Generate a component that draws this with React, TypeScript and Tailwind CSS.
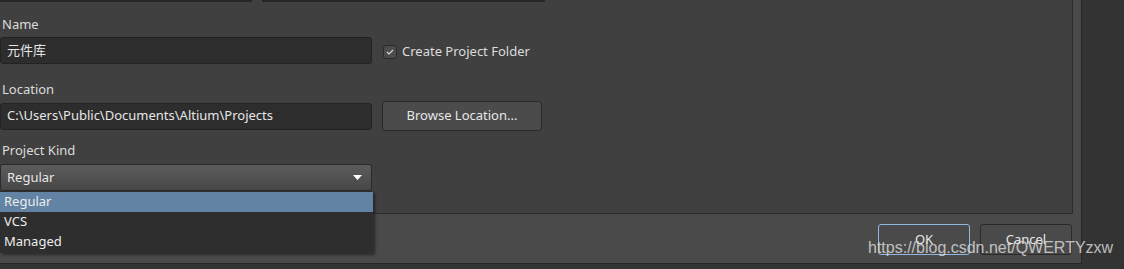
const font = "font-['Noto_Sans','Noto_Sans_CJK_SC',sans-serif]";

const Label = ({ children }: { children: React.ReactNode }) => (
  <div className="text-[13px] leading-[18px] text-[#dcdcdc]">{children}</div>
);

const TextField = ({ value }: { value: string }) => (
  <div className="w-[372px] h-[27px] flex items-center px-[6px] bg-[#2d2d2d] border border-[#232323] rounded-[3px] text-[13px] text-[#e6e6e6]">
    {value}
  </div>
);

const DialogButton = ({
  label,
  focused = false,
}: {
  label: string;
  focused?: boolean;
}) => (
  <button
    className={
      focused
        ? "w-[92px] h-[31px] rounded-[3px] border border-[#8fb8e2] bg-[#4a4a4a] text-[13px] text-[#e6e6e6]"
        : "w-[92px] h-[31px] rounded-[3px] border border-[#2a2a2a] bg-[#4a4a4a] text-[13px] text-[#e6e6e6]"
    }
  >
    {label}
  </button>
);

export default function App() {
  return (
    <div className={`relative w-[1124px] h-[269px] overflow-hidden bg-[#333333] ${font}`}>
      <div className="w-[1082px] h-[264px] flex flex-col bg-[#4a4a4a] border-r border-b border-[#262626]">
        {/* form panel */}
        <div className="w-[1073px] h-[214px] shrink-0 flex flex-col bg-[#404040] border-r border-b border-[#2b2b2b]">
          <div className="flex h-[2px] gap-[10px]">
            <div className="w-[252px] bg-[#262626]" />
            <div className="w-[283px] bg-[#262626]" />
          </div>

          <div className="pl-[2px] mt-[13px]">
            <Label>Name</Label>
          </div>
          <div className="flex items-center mt-[4px]">
            <TextField value="元件库" />
            <label className="flex items-center ml-[11px] mt-[3px] gap-[5px] text-[13px] text-[#dcdcdc]">
              <span className="w-[14px] h-[14px] flex items-center justify-center rounded-[3px] bg-[#4c4c4c] border border-[#2a2a2a]">
                <svg width="8" height="6" viewBox="0 0 8 6" fill="none">
                  <path d="M1 3l2 2 4-4" stroke="#d8d8d8" strokeWidth="1.1" />
                </svg>
              </span>
              Create Project Folder
            </label>
          </div>

          <div className="pl-[2px] mt-[16px]">
            <Label>Location</Label>
          </div>
          <div className="flex items-center mt-[3px]">
            <TextField value="C:\Users\Public\Documents\Altium\Projects" />
            <button className="ml-[10px] w-[160px] h-[30px] rounded-[3px] border border-[#2a2a2a] bg-[#4b4b4b] text-[13px] text-[#e6e6e6]">
              Browse Location...
            </button>
          </div>

          <div className="pl-[2px] mt-[10px]">
            <Label>Project Kind</Label>
          </div>
          <div className="mt-[5px] w-[372px] h-[27px] flex items-center justify-between px-[6px] rounded-[3px] border border-[#2a2a2a] bg-gradient-to-b from-[#5c5c5c] to-[#474747] text-[13px] text-[#e6e6e6]">
            <span>Regular</span>
            <svg width="9" height="5" viewBox="0 0 9 5" className="mr-[3px]">
              <path d="M0 0h9L4.5 5z" fill="#ffffff" />
            </svg>
          </div>
        </div>

        {/* footer */}
        <div className="flex justify-end gap-[10px] pt-[10px] pr-[9px]">
          <DialogButton label="OK" focused />
          <DialogButton label="Cancel" />
        </div>
      </div>

      {/* open dropdown list */}
      <div className="absolute left-0 top-[191px] w-[373px] flex flex-col py-[1px] bg-[#2e2e2e] shadow-[2px_2px_3px_rgba(0,0,0,0.45)] text-[13px] text-[#ececec]">
        <div className="h-[20px] flex items-center pl-[4px] bg-[#6283a3]">Regular</div>
        <div className="h-[20px] flex items-center pl-[4px]">VCS</div>
        <div className="h-[20px] flex items-center pl-[4px]">Managed</div>
      </div>

      {/* watermark */}
      <div className="absolute left-[868px] top-[238px] font-['Liberation_Sans',Arial,sans-serif] text-[16px] leading-[20px] text-[#e0e0e0]/80">
        https://blog.csdn.net/QWERTYzxw
      </div>
    </div>
  );
}
